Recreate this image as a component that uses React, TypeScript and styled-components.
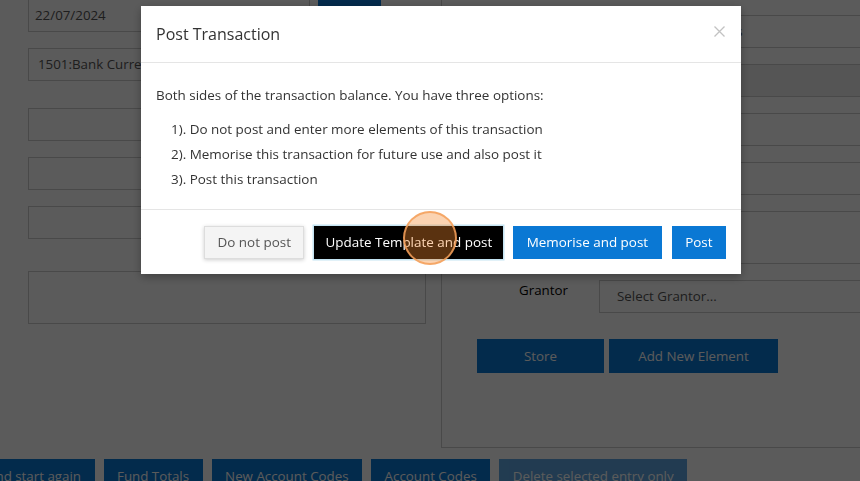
import React from "react";
import styled, { createGlobalStyle } from "styled-components";

const GlobalStyle = createGlobalStyle`
  html, body { margin: 0; padding: 0; overflow: hidden; background: #fff; }
  body {
    font-family: "Open Sans", "Liberation Sans", sans-serif;
    font-size: 13.33px;
    color: #333;
  }
  * { box-sizing: border-box; }
`;

const Page = styled.div`
  position: relative;
  width: 860px;
  height: 481px;
  overflow: hidden;
`;

const Layout = styled.div`
  display: grid;
  grid-template-columns: 398px 460px;
  column-gap: 15px;
  padding-left: 28px;
  margin-top: -28px;
`;

const LeftCol = styled.div`
  display: flex;
  flex-direction: column;
`;

const TopRow = styled.div`
  display: flex;
  align-items: flex-start;
  gap: 8px;
`;

const Field = styled.div<{ $mt?: number; $h?: number; $pl?: number; $w?: number; $disabled?: boolean }>`
  margin-top: ${(p) => p.$mt ?? 0}px;
  height: ${(p) => p.$h ?? 33}px;
  width: ${(p) => (p.$w ? `${p.$w}px` : "100%")};
  border: 1px solid #ccc;
  background: ${(p) => (p.$disabled ? "#eee" : "#fff")};
  color: #555;
  padding-left: ${(p) => p.$pl ?? 6}px;
  line-height: 31px;
  white-space: nowrap;
  overflow: hidden;
`;

const Btn = styled.div<{ $w?: number; $disabled?: boolean }>`
  height: 34px;
  ${(p) => (p.$w ? `width: ${p.$w}px;` : "padding: 0 13.5px;")}
  background: #0a78d4;
  color: #fff;
  line-height: 34px;
  text-align: center;
  white-space: nowrap;
  flex-shrink: 0;
  opacity: ${(p) => (p.$disabled ? 0.65 : 1)};
`;

const Panel = styled.div`
  border: 1px solid #ccc;
  padding: 42px 0 74px;
  display: flex;
  flex-direction: column;
`;

const FormGrid = styled.div`
  display: grid;
  grid-template-columns: 157px 1fr;
  row-gap: 16px;
`;

const Label = styled.div`
  padding-left: 77px;
  line-height: 20px;
  color: #000;
  white-space: nowrap;
`;

const PanelButtons = styled.div`
  display: flex;
  gap: 5px;
  margin-top: 26px;
  padding-left: 35px;
`;

const BottomRow = styled.div`
  grid-column: 1 / -1;
  display: flex;
  gap: 9px;
  margin-top: 11px;
  margin-left: -89px;
`;

const Backdrop = styled.div`
  position: fixed;
  inset: 0;
  background: rgba(0, 0, 0, 0.643);
`;

const Modal = styled.div`
  position: fixed;
  left: 141px;
  top: 6px;
  width: 600px;
  background: #fff;
  box-shadow: 0 3px 9px rgba(0, 0, 0, 0.3);
  font-size: 13.45px;
`;

const Header = styled.div`
  display: flex;
  align-items: center;
  justify-content: space-between;
  padding: 16px 16px 15px 15px;
  border-bottom: 1px solid #e5e5e5;
`;

const Title = styled.h4`
  margin: 0;
  font-size: 16px;
  font-weight: 400;
  line-height: 25px;
  color: #333;
`;

const Close = styled.span`
  display: flex;
  width: 11px;
  height: 11px;
  margin-top: -7px;
`;

const Body = styled.div`
  padding: 15px;
  color: #333;
`;

const Para = styled.p`
  margin: 7px 0 0;
  line-height: 20px;
`;

const List = styled.ul`
  list-style: none;
  margin: 12px 0 2px;
  padding-left: 15px;
`;

const Item = styled.li`
  line-height: 25px;
`;

const Footer = styled.div`
  display: flex;
  justify-content: flex-end;
  gap: 10px;
  padding: 16px 15px 15px;
  border-top: 1px solid #e5e5e5;
`;

const ModalBtn = styled.button<{ $variant: "default" | "dark" | "primary" }>`
  height: 33px;
  padding: 0 ${(p) => (p.$variant === "dark" ? 10 : 12.5)}px;
  font: inherit;
  font-size: 13.45px;
  line-height: 31px;
  white-space: nowrap;
  border: 1px solid;
  border-radius: 0;
  ${(p) =>
    p.$variant === "default"
      ? `background:#f4f4f4;border-color:#ddd;color:#555;box-shadow:0 1px 4px rgba(0,0,0,0.2);`
      : p.$variant === "dark"
      ? `background:#000;border-color:#000;color:#fff;box-shadow:0 0 0 1.5px #c4e4f2;`
      : `background:#0a78d4;border-color:#0a78d4;color:#fff;`}
`;

const Pointer = styled.div`
  position: fixed;
  left: 403px;
  top: 211px;
  width: 54px;
  height: 54px;
  border-radius: 50%;
  background: rgba(243, 135, 43, 0.37);
  border: 2px solid rgba(244, 160, 90, 0.85);
`;

export default function App() {
  return (
    <>
      <GlobalStyle />
      <Page>
        <Layout>
          <LeftCol>
            <TopRow>
              <Field $mt={27} $w={282}>22/07/2024</Field>
              <Btn $w={63}>Go</Btn>
            </TopRow>
            <Field $mt={16} $pl={9}>1501:Bank Current Account</Field>
            <Field $mt={27} />
            <Field $mt={16} />
            <Field $mt={16} />
            <Field $mt={32} $h={53} />
          </LeftCol>
          <Panel>
            <FormGrid>
              <Label>Fund</Label>
              <Field $pl={24}>Unrestricted Funds</Field>
              <Label>Balance</Label>
              <Field $disabled />
              <Label>Debit</Label>
              <Field />
              <Label>Credit</Label>
              <Field />
              <Label>Narrative</Label>
              <Field $h={53} />
              <Label>Grantor</Label>
              <Field $pl={17}>Select Grantor...</Field>
            </FormGrid>
            <PanelButtons>
              <Btn $w={127}>Store</Btn>
              <Btn $w={169}>Add New Element</Btn>
            </PanelButtons>
          </Panel>
          <BottomRow>
            <Btn>Clear and start again</Btn>
            <Btn>Fund Totals</Btn>
            <Btn>New Account Codes</Btn>
            <Btn>Account Codes</Btn>
            <Btn $disabled>Delete selected entry only</Btn>
          </BottomRow>
        </Layout>
      </Page>
      <Backdrop />
      <Modal>
        <Header>
          <Title>Post Transaction</Title>
          <Close>
            <svg width="11" height="11" viewBox="0 0 11 11">
              <path d="M0.5 0.5 L10.5 10.5 M10.5 0.5 L0.5 10.5" stroke="#c2c2c2" strokeWidth="1.3" fill="none" />
            </svg>
          </Close>
        </Header>
        <Body>
          <Para>Both sides of the transaction balance. You have three options:</Para>
          <List>
            <Item>1). Do not post and enter more elements of this transaction</Item>
            <Item>2). Memorise this transaction for future use and also post it</Item>
            <Item>3). Post this transaction</Item>
          </List>
        </Body>
        <Footer>
          <ModalBtn $variant="default">Do not post</ModalBtn>
          <ModalBtn $variant="dark">Update Template and post</ModalBtn>
          <ModalBtn $variant="primary">Memorise and post</ModalBtn>
          <ModalBtn $variant="primary">Post</ModalBtn>
        </Footer>
      </Modal>
      <Pointer />
    </>
  );
}
